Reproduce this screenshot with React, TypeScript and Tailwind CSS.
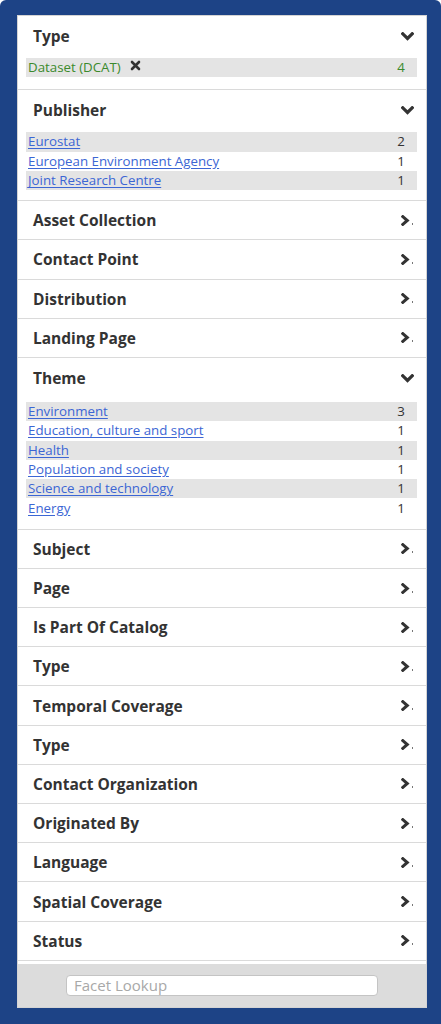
import React from 'react';

type Item = { label: string; count: number };

interface Facet {
  title: string;
  items?: Item[];
  selected?: boolean;
  headerClass?: string;
  padClass?: string;
}

const facets: Facet[] = [
  { title: 'Type', items: [{ label: 'Dataset (DCAT)', count: 4 }], selected: true, headerClass: 'h-[42px]', padClass: 'pb-[12px]' },
  {
    title: 'Publisher',
    items: [
      { label: 'Eurostat', count: 2 },
      { label: 'European Environment Agency', count: 1 },
      { label: 'Joint Research Centre', count: 1 },
    ],
    headerClass: 'h-[42px]',
    padClass: 'pb-[10px]',
  },
  { title: 'Asset Collection' },
  { title: 'Contact Point' },
  { title: 'Distribution' },
  { title: 'Landing Page' },
  {
    title: 'Theme',
    items: [
      { label: 'Environment', count: 3 },
      { label: 'Education, culture and sport', count: 1 },
      { label: 'Health', count: 1 },
      { label: 'Population and society', count: 1 },
      { label: 'Science and technology', count: 1 },
      { label: 'Energy', count: 1 },
    ],
    headerClass: 'h-[44px]',
    padClass: 'pb-[11px]',
  },
  { title: 'Subject' },
  { title: 'Page' },
  { title: 'Is Part Of Catalog' },
  { title: 'Type' },
  { title: 'Temporal Coverage' },
  { title: 'Type' },
  { title: 'Contact Organization' },
  { title: 'Originated By' },
  { title: 'Language' },
  { title: 'Spatial Coverage' },
  { title: 'Status' },
];

const ChevronDown = () => (
  <svg width="13" height="9" viewBox="0 0 13 9" className="block">
    <polyline points="1.8,1.8 6.5,6.4 11.2,1.8" fill="none" stroke="#333" strokeWidth="3.2" strokeLinecap="square" />
  </svg>
);

const ChevronRight = () => (
  <span className="flex items-end">
    <svg width="9" height="11" viewBox="0 0 9 11" className="block">
      <polyline points="1.8,1.6 6.3,5.5 1.8,9.4" fill="none" stroke="#333" strokeWidth="3" strokeLinecap="square" />
    </svg>
    <span className="ml-[2px] mb-[1px] block h-[2px] w-[1px] bg-[#777]" />
  </span>
);

const Remove = () => (
  <svg width="11" height="11" viewBox="0 0 11 11" className="ml-[9px] inline-block align-[1px]">
    <path d="M2 2 L9 9 M9 2 L2 9" stroke="#333" strokeWidth="2.6" strokeLinecap="round" />
  </svg>
);

const FacetBlock = ({ facet }: { facet: Facet }) => {
  if (!facet.items) {
    return (
      <div className="flex h-[39.2px] items-center justify-between border-b border-[#dadada] pl-[15px] pr-[13px]">
        <span className="text-[15.5px] font-bold leading-5 text-[#333]">{facet.title}</span>
        <ChevronRight />
      </div>
    );
  }

  return (
    <div className={`border-b border-[#dadada] ${facet.padClass}`}>
      <div className={`flex items-start justify-between pl-[15px] pr-3 pt-[10px] ${facet.headerClass}`}>
        <span className="text-[15.5px] font-bold leading-5 text-[#333]">{facet.title}</span>
        <span className="pt-[6px]">
          <ChevronDown />
        </span>
      </div>
      <ul className="ml-2 mr-[9px]">
        {facet.items.map((item, i) => (
          <li
            key={item.label}
            className={`flex h-[19.3px] items-center justify-between pl-[2px] text-[13.3px] leading-[19px] ${i % 2 === 0 ? 'bg-[#e4e4e4]' : ''}`}
          >
            {facet.selected ? (
              <span className="text-[#3b8a2c]">
                {item.label}
                <Remove />
              </span>
            ) : (
              <a href="#" className="text-[#3c66d4] underline underline-offset-[2px]">
                {item.label}
              </a>
            )}
            <span className={`w-8 text-center ${facet.selected ? 'text-[#3b8a2c]' : 'text-[#333]'}`}>{item.count}</span>
          </li>
        ))}
      </ul>
    </div>
  );
};

export default function App() {
  return (
    <div
      className="min-h-screen rounded-t-[6px] bg-[#1d4386] pb-4 pl-[17px] pr-[14px] pt-[15px]"
      style={{ fontFamily: '"Open Sans", "Noto Sans", sans-serif' }}
    >
      <div className="border border-[#d4d4d4] bg-white">
        {facets.map((f, i) => (
          <FacetBlock key={i} facet={f} />
        ))}
        <div className="h-[3px] bg-white" />
        <div className="flex h-[43px] items-center justify-center bg-[#dcdcdc]">
          <input
            placeholder="Facet Lookup"
            className="h-[21px] w-[312px] rounded-[4px] border border-[#c4c4c4] bg-white px-[7px] text-[15px] leading-[19px] text-[#333] outline-none placeholder:text-[#a8a8a8]"
          />
        </div>
      </div>
    </div>
  );
}
